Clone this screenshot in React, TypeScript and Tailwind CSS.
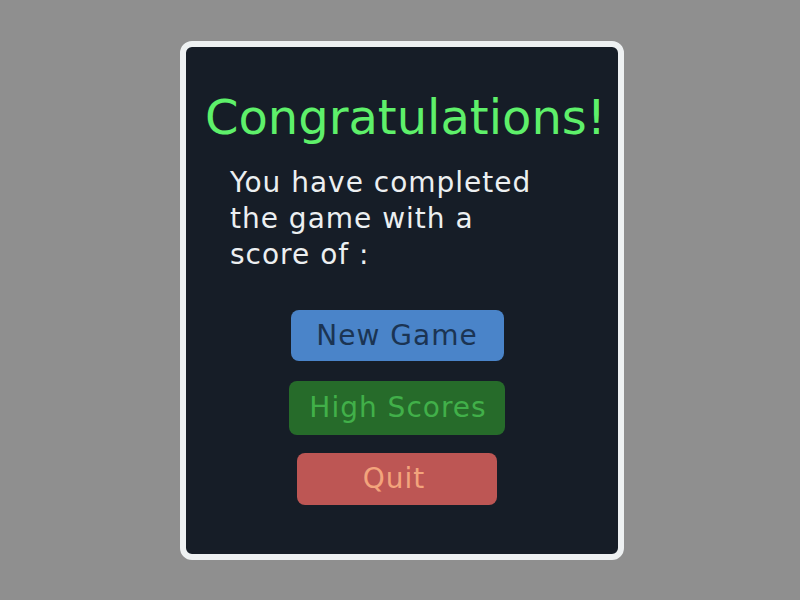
import React from "react";

const buttons = [
  { label: "New Game", cls: "w-[213px] h-[51px] mt-[37px] bg-[#4a84c9] text-[#1b3453]" },
  { label: "High Scores", cls: "w-[216px] h-[54px] mt-[20px] pl-[2px] bg-[#266b2a] text-[#41b049]" },
  { label: "Quit", cls: "w-[200px] h-[52px] mt-[18px] pr-[6px] bg-[#bd5654] text-[#f3a47c]" },
];

export default function App() {
  return (
    <div
      className="w-[800px] h-[600px] bg-[#8f8f8f] pt-[41px] pl-[180px]"
      style={{ fontFamily: '"DejaVu Sans", sans-serif' }}
    >
      <div className="w-[444px] h-[519px] rounded-[12px] border-[6px] border-[#eef1f2] bg-[#161d27] flex flex-col">
        {/* Title */}
        <h1 className="pt-[41px] pl-[7px] text-center text-[48px] leading-[58px] text-[#5ef06a] whitespace-nowrap">
          Congratulations!
        </h1>

        {/* Message */}
        <p className="mt-[19px] ml-[44px] w-[312px] text-[28px] leading-[36px] tracking-[1px] text-[#eceff1]">
          You have completed the game with a score of :
        </p>

        {/* Menu */}
        <div className="flex flex-col items-center pr-[10px]">
          {buttons.map((b) => (
            <button
              key={b.label}
              className={`${b.cls} rounded-[8px] text-[28px] leading-none tracking-[1px] flex items-center justify-center`}
            >
              {b.label}
            </button>
          ))}
        </div>
      </div>
    </div>
  );
}
